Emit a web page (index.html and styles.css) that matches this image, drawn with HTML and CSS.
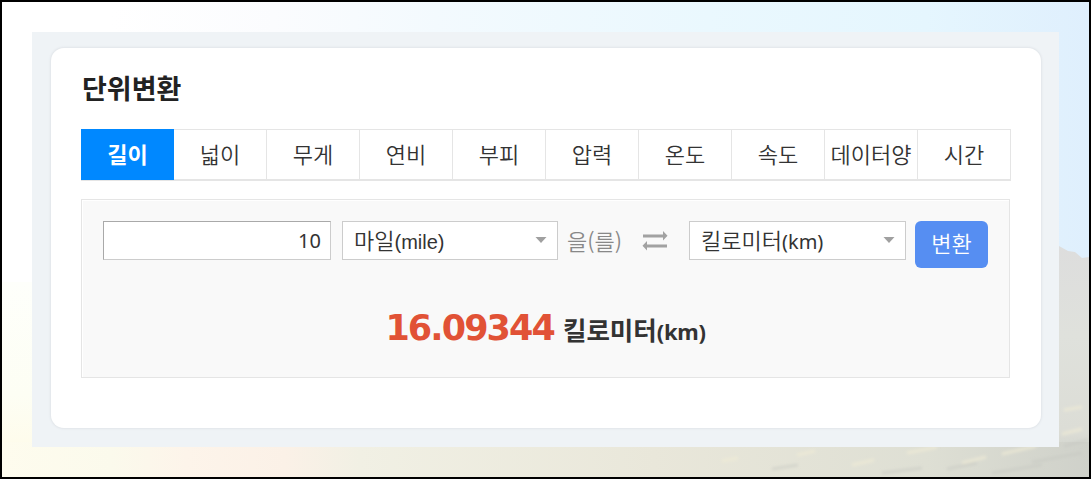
FILE: index.html
```
<!DOCTYPE html>
<html lang="ko">
  <head>
    <meta charset="UTF-8" />
    <meta name="viewport" content="width=device-width, initial-scale=1.0" />
    <title>단위변환</title>
    <link rel="stylesheet" href="styles.css">
  </head>
  <body>
    <div class="page">
      <svg class="scene" viewBox="0 0 1087 475" preserveAspectRatio="none">
        <defs>
          <linearGradient id="hill" x1="0" y1="0" x2="0" y2="1">
            <stop offset="0" stop-color="#dddddd" />
            <stop offset="0.4" stop-color="#dfe1dc" />
            <stop offset="0.8" stop-color="#dcddd6" />
            <stop offset="1" stop-color="#c9ccc5" />
          </linearGradient>
          <linearGradient id="left" x1="0" y1="0" x2="0" y2="1">
            <stop offset="0" stop-color="#fefffb" />
            <stop offset="0.7" stop-color="#fdfef4" />
            <stop offset="1" stop-color="#fefcec" />
          </linearGradient>
          <linearGradient id="ground" x1="0" y1="0" x2="1" y2="0">
            <stop offset="0" stop-color="#fefcee" />
            <stop offset="0.1" stop-color="#fbfaec" />
            <stop offset="0.17" stop-color="#fdf4ea" />
            <stop offset="0.26" stop-color="#fbf1e7" />
            <stop offset="0.33" stop-color="#f1f0e4" />
            <stop offset="0.6" stop-color="#e9e7da" />
            <stop offset="0.85" stop-color="#dedfd4" />
            <stop offset="1" stop-color="#cfd1ca" />
          </linearGradient>
          <filter id="soft"><feGaussianBlur stdDeviation="1.500" /></filter>
        </defs>
        <rect y="280" width="40" height="160" fill="url(#left)" />
        <path d="M1050 240l7 4 9 5 7 1 7 6 7-1v220h-37z" fill="url(#hill)" />
        <rect y="440" width="1087" height="35" fill="url(#ground)" />
        <g filter="url(#soft)">
          <g stroke="#f0ecd6" stroke-width="3" opacity="0.7">
            <path d="M720 459l16-3M795 453l18-4M850 463l22-5M905 451l30-6M960 461l24-6M1000 452l34-8M1060 432l20-5M1062 408l18-3" />
          </g>
          <g stroke="#c5c8c1" stroke-width="3" opacity="0.5">
            <path d="M770 467l26-4M880 471l40-5M945 467l30-6M990 471l50-8M1030 460l50-9M1062 444l24-6" />
          </g>
        </g>
      </svg>

      <div class="frame">
        <div class="card">
          <h1 class="title">단위변환</h1>
          <ul class="tabs">
            <li class="tab on">길이</li>
            <li class="tab">넓이</li>
            <li class="tab">무게</li>
            <li class="tab">연비</li>
            <li class="tab">부피</li>
            <li class="tab">압력</li>
            <li class="tab">온도</li>
            <li class="tab">속도</li>
            <li class="tab">데이터양</li>
            <li class="tab">시간</li>
          </ul>

          <div class="panel">
            <div class="row">
              <input class="amount" type="text" value="10" />
              <div class="select from">
                <span>마일<span class="mile">(mile)</span></span>
                <svg class="arrow" width="12" height="7" viewBox="0 0 12 7"><path d="M0.500 0h11l-5.500 6z" fill="#a0a0a0" /></svg>
              </div>
              <span class="josa">을(를)</span>
              <svg class="swap" width="26" height="20" viewBox="0 0 26 20" fill="#a2a2a2">
                <path d="M1 3.500h20V0l4.500 4.700L21 9.500V6.500H1z" />
                <path d="M25 13.500H5V10L0.500 14.800 5 19.500V16.500h20z" />
              </svg>
              <div class="select to">
                <span>킬로미터<span class="km">(km)</span></span>
                <svg class="arrow" width="12" height="7" viewBox="0 0 12 7"><path d="M0.500 0h11l-5.500 6z" fill="#a0a0a0" /></svg>
              </div>
              <button class="convert">변환</button>
            </div>
            <p class="result">
              <strong class="num">16.09344</strong>
              <span class="unit">킬로미터<span class="unit-km">(km)</span></span>
            </p>
          </div>
        </div>
      </div>
    </div>
  </body>
</html>
```
FILE: styles.css
```
* {
  margin: 0;
  padding: 0;
  box-sizing: border-box;
}
body {
  font-family: "Noto Sans CJK KR", "Noto Sans", sans-serif;
  color: #333;
}
.page {
  position: relative;
  width: 1091px;
  height: 479px;
  padding: 30px;
  border: 2px solid #000;
  background: linear-gradient(90deg, #fff 10%, #fbfcfe 25%, #f3fafe 40%, #eaf8fe 65%, #e5f6fe 85%, #dfeffd 100%);
  overflow: hidden;
}
.scene {
  position: absolute;
  left: 0;
  top: 0;
  width: 1087px;
  height: 475px;
}
.frame {
  position: relative;
  width: 1027px;
  height: 415px;
  padding: 16px 18px 19px 19px;
  background-color: #eff3f6;
}
.card {
  height: 380px;
  padding: 21px 30px 0;
  border-radius: 13px;
  background-color: #fff;
  box-shadow: 0 0 2px 1px #e1e5e9;
}
.title {
  height: 60px;
  padding-left: 1px;
  line-height: 38px;
  font-size: 27px;
  font-weight: bold;
  color: #222;
}
.tabs {
  display: flex;
  height: 52px;
  border: 1px solid #e5e5e5;
  border-bottom-width: 2px;
  list-style: none;
}
.tab {
  width: 93px;
  flex: none;
  border-right: 1px solid #e5e5e5;
  line-height: 46px;
  text-align: center;
  font-size: 22px;
  font-weight: 350;
  white-space: nowrap;
}
.tab:last-child {
  width: 92px;
  border-right: 0;
}
.on {
  height: 51px;
  margin: -1px 0 0 -1px;
  border-right: 0;
  line-height: 48px;
  background-color: #08f;
  color: #fff;
  font-weight: bold;
}
.panel {
  width: 929px;
  height: 179px;
  margin-top: 18px;
  padding: 21px 21px 0;
  border: 1px solid #e5e5e5;
  background-color: #f9f9f9;
  box-shadow: inset 1px 1px 0 #fff;
}
.row {
  display: flex;
  align-items: flex-start;
  height: 47px;
}
.amount {
  width: 228px;
  height: 39px;
  padding-right: 9px;
  border: 1px solid #ccc;
  border-top-color: #a9a9a9;
  border-left-color: #a9a9a9;
  background-color: #fff;
  font: 20px "Noto Sans", sans-serif;
  color: #333;
  text-align: right;
}
.select {
  display: flex;
  justify-content: space-between;
  height: 39px;
  padding: 0 10px 0 11px;
  border: 1px solid #ccc;
  background-color: #fff;
  line-height: 35px;
  font-size: 22px;
  font-weight: 350;
}
.from {
  width: 216px;
  margin-left: 11px;
}
.to {
  width: 217px;
  margin-left: 21px;
}
.arrow {
  margin-top: 15px;
}
.mile {
  font: 20px "Liberation Sans", sans-serif;
}
.km {
  font: 20px "Noto Sans", sans-serif;
}
.josa {
  width: 55px;
  margin-left: 9px;
  line-height: 39px;
  font-size: 22px;
  font-weight: 350;
  color: #888;
  white-space: nowrap;
}
.swap {
  margin: 10px 0 0 20px;
}
.convert {
  width: 73px;
  height: 47px;
  margin-left: 9px;
  padding-bottom: 5px;
  border: 0;
  border-radius: 6px;
  background-color: #568ef2;
  color: #fff;
  font: 350 22px "Noto Sans CJK KR", sans-serif;
}
.result {
  display: flex;
  justify-content: center;
  align-items: baseline;
  gap: 9px;
  margin-top: 35px;
  line-height: 50px;
}
.num {
  font: bold 35px/50px "DejaVu Sans", sans-serif;
  letter-spacing: -1.9px;
  color: #e15236;
}
.unit {
  font-size: 25.5px;
  font-weight: bold;
}
.unit-km {
  font-family: "Noto Sans", sans-serif;
  font-size: 22px;
  letter-spacing: -0.3px;
}
```
